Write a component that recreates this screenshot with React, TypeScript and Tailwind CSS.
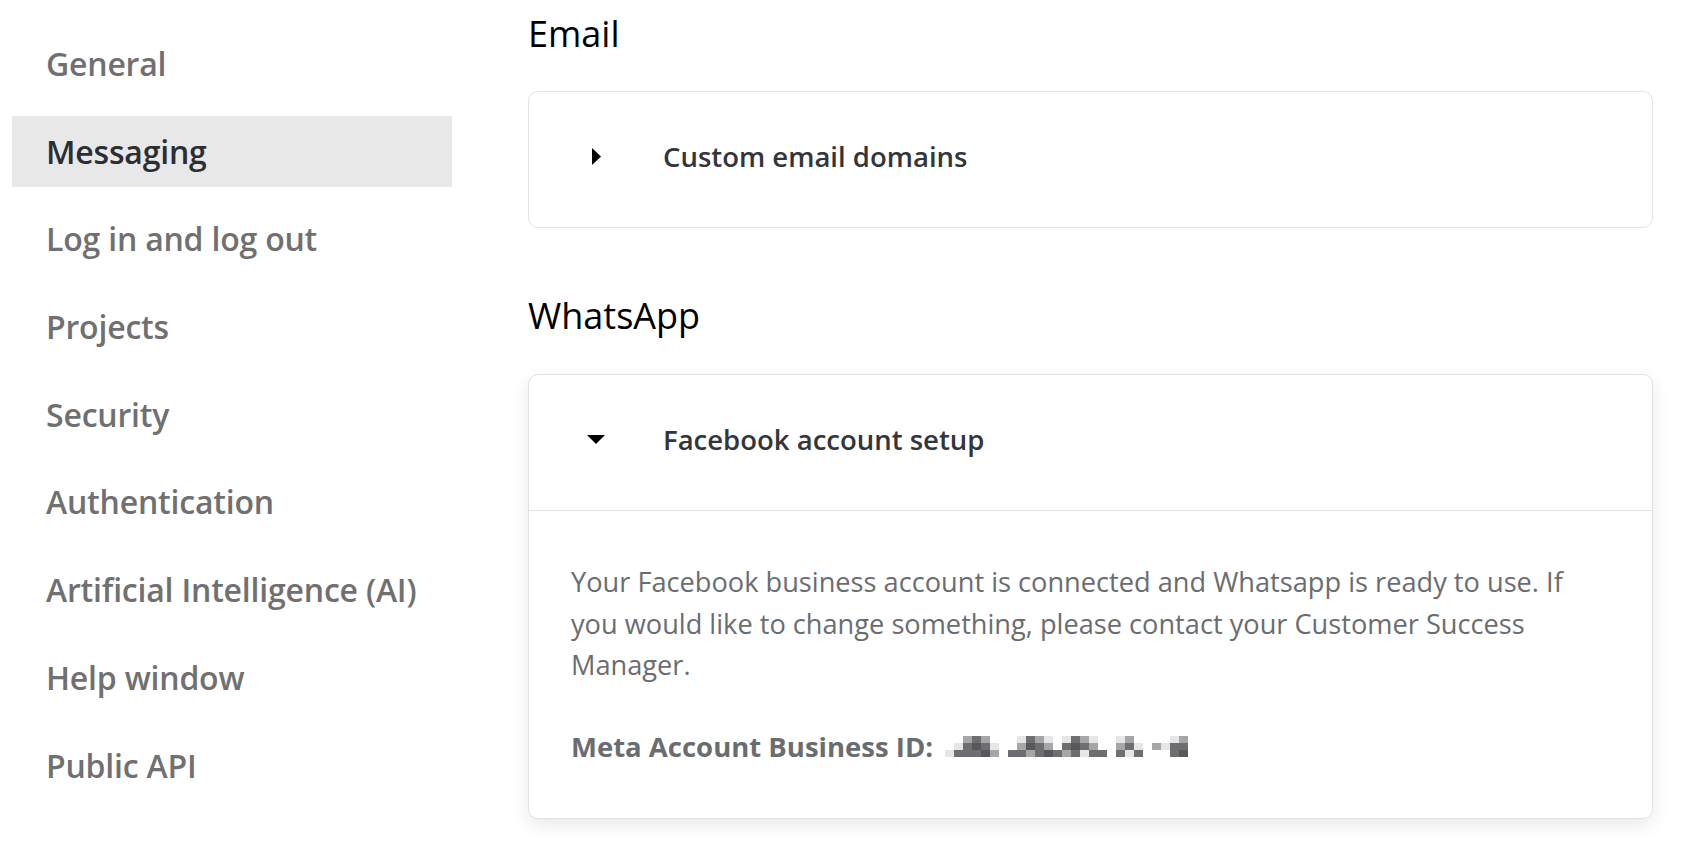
import React from "react";

const navItems = [
  "General",
  "Messaging",
  "Log in and log out",
  "Projects",
  "Security",
  "Authentication",
  "Artificial Intelligence (AI)",
  "Help window",
  "Public API",
];

// pixelated (redacted) ID: columns of [top, mid, bottom]
const C: Record<string, string> = {
  l: "#e6e6e6",
  m: "#a6a6a8",
  d: "#6e6e72",
  k: "#58585c",
};
const cols = [
  "  l", " ld", "mdd", "dkd", "mdk", " lm", "   ",
  "  d", "lmd", "dkm", "mdd", "lmk", "  d",
  "ldm", "dkd", "mdl", "lmd", "  d", "   ",
  "lmd", "mdl", " ld", "   ",
  " m ", " l ", "ldd", "mdk",
];

function Redacted() {
  const cw = 9;
  const ch = 7;
  const rects: React.ReactNode[] = [];
  cols.forEach((c, i) => {
    for (let r = 0; r < 3; r++) {
      const v = c[r];
      if (v && v !== " ") {
        rects.push(
          <rect key={`${i}-${r}`} x={i * cw} y={r * ch} width={cw} height={ch} fill={C[v]} />
        );
      }
    }
  });
  return (
    <svg width={cols.length * cw} height={21} viewBox={`0 0 ${cols.length * cw} 21`} className="block">
      {rects}
    </svg>
  );
}

function TriRight() {
  return (
    <svg width="9" height="17" viewBox="0 0 9 17" className="block">
      <path d="M0 0 L9 8.5 L0 17 Z" fill="#000" />
    </svg>
  );
}

function TriDown() {
  return (
    <svg width="18" height="9" viewBox="0 0 18 9" className="block">
      <path d="M0 0 L18 0 L9 9 Z" fill="#000" />
    </svg>
  );
}

export default function App() {
  return (
    <div
      className="flex w-full h-[860px] bg-white overflow-hidden"
      style={{ fontFamily: '"Open Sans", "Noto Sans", sans-serif' }}
    >
      <nav className="w-[452px] shrink-0 pl-[12px] pt-[28.5px] flex flex-col gap-[16.7px]">
        {navItems.map((item) => {
          const active = item === "Messaging";
          return (
            <div
              key={item}
              className={
                active
                  ? "h-[71px] flex items-center pl-[34px] bg-[#e8e8e8] text-[#2b2f33] text-[32px] font-semibold tracking-[-0.2px]"
                  : "h-[71px] flex items-center pl-[34px] text-[#707070] text-[32px] font-semibold tracking-[-0.2px]"
              }
            >
              {item}
            </div>
          );
        })}
      </nav>

      <main className="flex-1 pl-[76px] pr-[47px] pt-[10px]">
        <h2 className="text-[36px] leading-[48px] font-normal text-black">Email</h2>
        <div className="mt-[33px] h-[137px] rounded-[10px] border border-[#e2e2e2] bg-white flex items-center pl-[57px] pb-[6px]">
          <div className="w-[20px] flex justify-center">
            <TriRight />
          </div>
          <div className="ml-[57px] text-[27.5px] font-semibold text-[#32363a]">Custom email domains</div>
        </div>

        <h2 className="mt-[64px] text-[36px] leading-[48px] font-normal text-black">WhatsApp</h2>
        <div className="mt-[34px] rounded-[10px] border border-[#e2e2e2] bg-white shadow-[0_6px_18px_rgba(0,0,0,0.09)]">
          <div className="h-[136px] flex items-center pl-[57px] pb-[6px] border-b border-[#e2e2e2]">
            <div className="w-[20px] flex justify-center">
              <TriDown />
            </div>
            <div className="ml-[57px] text-[27.5px] font-semibold text-[#32363a]">Facebook account setup</div>
          </div>
          <div className="pl-[42px] pr-[42px] pt-[50px] pb-[51px]">
            <p className="text-[27.2px] leading-[41.5px] text-[#6a6d70]">
              Your Facebook business account is connected and Whatsapp is ready to use. If you would like to change
              something, please contact your Customer Success Manager.
            </p>
            <div className="mt-[40px] flex items-center text-[27.5px] leading-[41px] font-bold text-[#6a6d70]">
              <span>Meta Account Business ID:</span>
              <span className="ml-[12px]">
                <Redacted />
              </span>
            </div>
          </div>
        </div>
      </main>
    </div>
  );
}
